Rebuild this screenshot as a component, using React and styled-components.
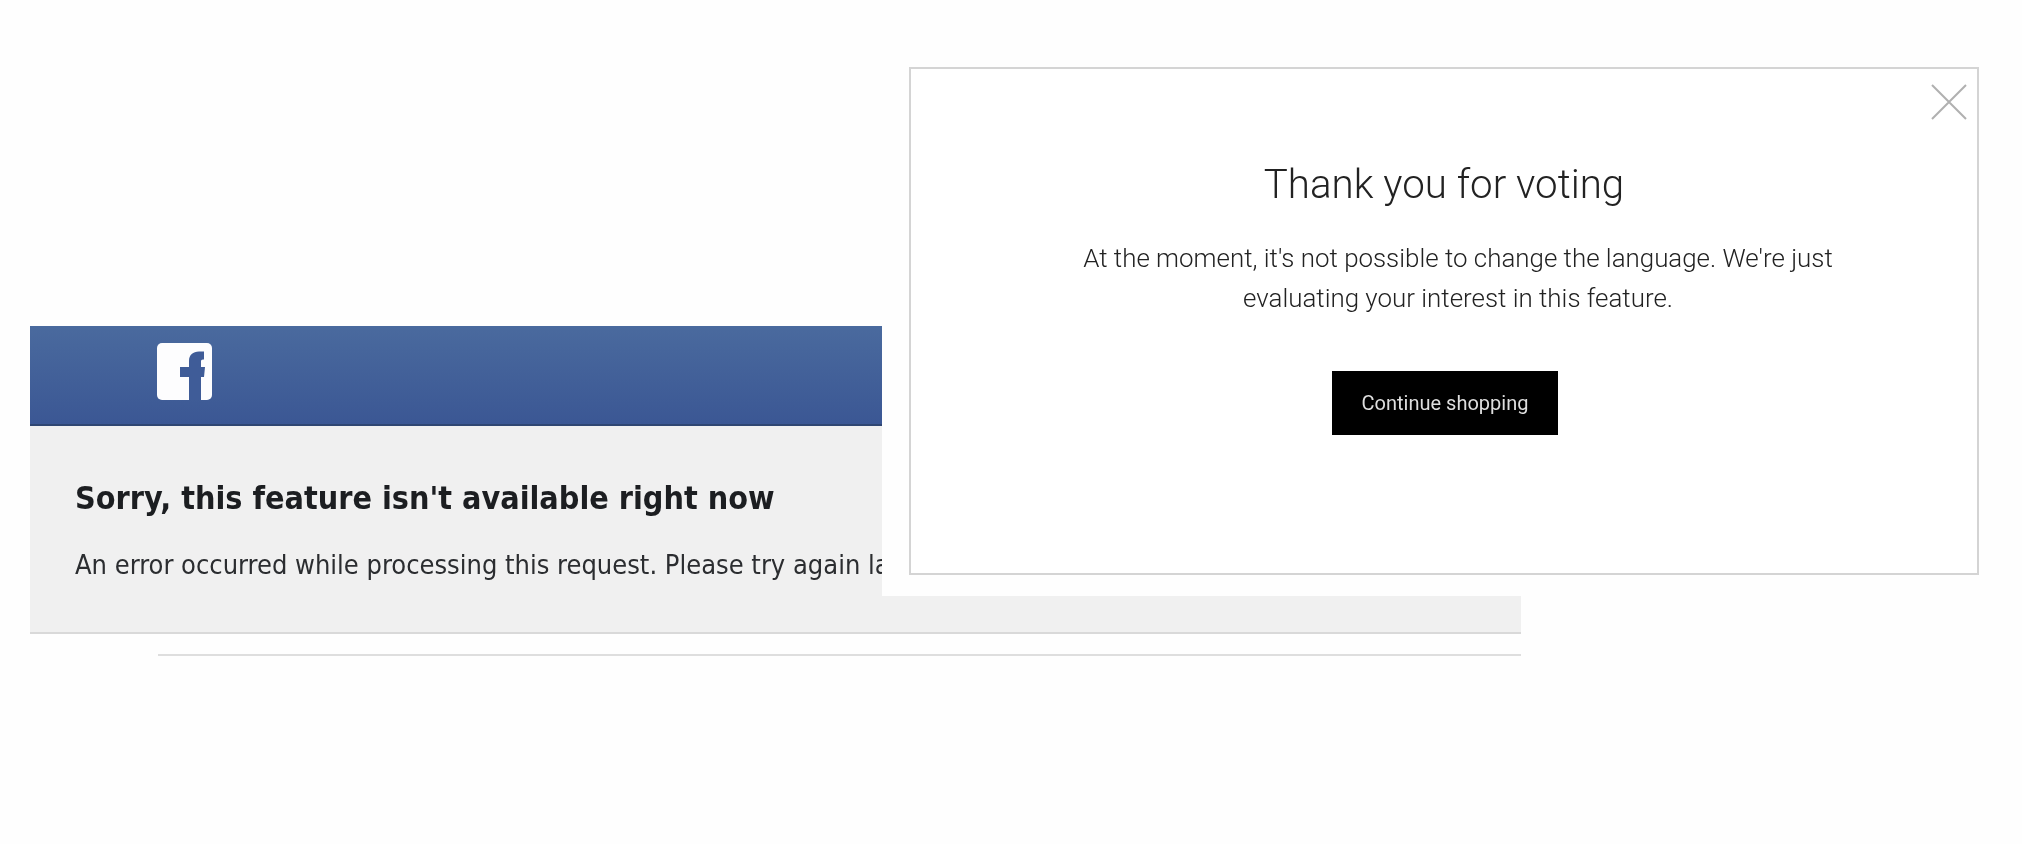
import React from 'react';
import styled, { createGlobalStyle } from 'styled-components';

const GlobalStyle = createGlobalStyle`
	html, body {
		margin: 0;
		padding: 0;
		background: #fefefe;
	}
	body {
		overflow: hidden;
	}
`;

const Stage = styled.main`
	position: relative;
	width: 2022px;
	height: 844px;
	padding: 326px 0 0 30px;
	box-sizing: border-box;
	filter: blur(0.45px);
`;

const ErrorCard = styled.section`
	width: 1491px;
`;

const BlueBar = styled.header`
	height: 100px;
	padding: 17px 0 0 127px;
	box-sizing: border-box;
	background: linear-gradient(#4a6a9e, #3b5794);
	border-bottom: 2px solid #2f4672;
`;

const ErrorBody = styled.div`
	height: 208px;
	padding: 50px 0 0 45px;
	box-sizing: border-box;
	background: #f0f0f0;
	border-bottom: 2px solid #d9d9d9;
`;

const ErrorTitle = styled.h1`
	margin: 0;
	font-family: 'DejaVu Sans Condensed', 'DejaVu Sans', sans-serif;
	font-stretch: condensed;
	font-weight: 700;
	font-size: 32px;
	line-height: 44px;
	color: #1c1e21;
	white-space: nowrap;
`;

const ErrorText = styled.p`
	margin: 27px 0 0;
	font-family: 'DejaVu Sans Condensed', 'DejaVu Sans', sans-serif;
	font-stretch: condensed;
	font-size: 27px;
	line-height: 36px;
	color: #2b2d30;
	white-space: nowrap;
`;

const FooterRule = styled.div`
	height: 2px;
	margin: 20px 0 0 128px;
	background: #dedede;
`;

const ModalCover = styled.div`
	position: absolute;
	top: 0;
	left: 882px;
	right: 0;
	height: 596px;
	padding: 67px 0 0 27px;
	box-sizing: border-box;
	background: #fefefe;
`;

const Modal = styled.section`
	position: relative;
	display: flex;
	flex-direction: column;
	align-items: center;
	width: 1070px;
	height: 508px;
	padding-top: 90px;
	box-sizing: border-box;
	background: #fff;
	border: 2px solid #d4d4d4;
	font-family: Roboto, sans-serif;
	color: #222;
`;

const CloseButton = styled.button`
	position: absolute;
	top: 14px;
	right: 9px;
	width: 38px;
	height: 38px;
	padding: 0;
	border: 0;
	background: none;
	color: #b0b0b0;
`;

const ModalTitle = styled.h2`
	margin: 0;
	font-weight: 300;
	font-size: 40.3px;
	line-height: 52px;
`;

const ModalText = styled.p`
	margin: 27px 0 0 28px;
	width: 820px;
	font-weight: 300;
	font-size: 25.9px;
	line-height: 40px;
	text-align: center;
`;

const ShopButton = styled.button`
	margin: 53px 0 0 2px;
	width: 226px;
	height: 64px;
	padding: 0;
	border: 0;
	background: #000;
	color: #dedede;
	font-family: Roboto, sans-serif;
	font-size: 20px;
`;

const FacebookLogo = () => (
	<svg width='55' height='57' viewBox='0 0 55 57'>
		<rect width='55' height='57' rx='5' fill='#fdfdfe' />
		<path
			d='M32 57V34h-9V24h9v-6c0-6 4-9.5 10-9.5h5v8h-1c-1.500 0-2 .7-2 2V24h4l-1 10h-3v23z'
			fill='#3f5c98'
		/>
	</svg>
);

const CloseIcon = () => (
	<svg width='38' height='38' viewBox='0 0 38 38'>
		<path
			d='M2 2l34 34M36 2L2 36'
			stroke='currentColor'
			strokeWidth='2'
			fill='none'
		/>
	</svg>
);

const App = () => (
	<Stage>
		<GlobalStyle />
		<ErrorCard>
			<BlueBar>
				<FacebookLogo />
			</BlueBar>
			<ErrorBody>
				<ErrorTitle>Sorry, this feature isn't available right now</ErrorTitle>
				<ErrorText>
					An error occurred while processing this request. Please try again
					later.
				</ErrorText>
			</ErrorBody>
			<FooterRule />
		</ErrorCard>
		<ModalCover>
			<Modal>
				<CloseButton aria-label='Close'>
					<CloseIcon />
				</CloseButton>
				<ModalTitle>Thank you for voting</ModalTitle>
				<ModalText>
					At the moment, it's not possible to change the language. We're just
					evaluating your interest in this feature.
				</ModalText>
				<ShopButton>Continue shopping</ShopButton>
			</Modal>
		</ModalCover>
	</Stage>
);

export default App;
